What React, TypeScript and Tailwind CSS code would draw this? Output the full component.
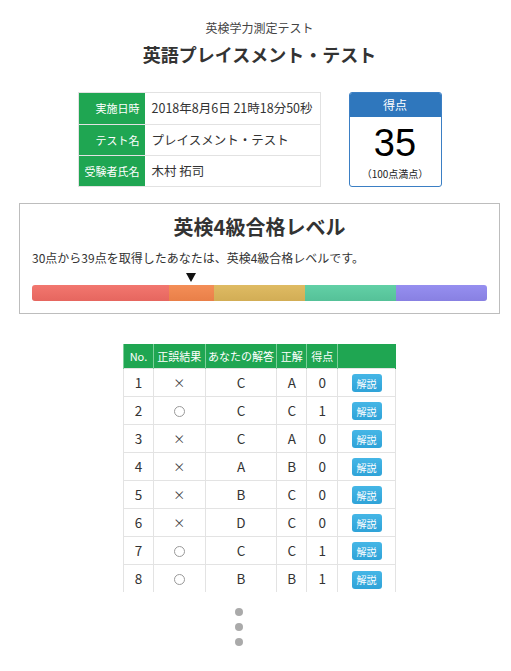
import React from 'react';

const font = { fontFamily: '"Noto Sans CJK JP", "Liberation Sans", sans-serif' };

const info = [
  { label: '実施日時', value: '2018年8月6日 21時18分50秒' },
  { label: 'テスト名', value: 'プレイスメント・テスト' },
  { label: '受験者氏名', value: '木村 拓司' },
];

const rows = [
  { no: 1, ok: false, ans: 'C', correct: 'A', pt: 0 },
  { no: 2, ok: true, ans: 'C', correct: 'C', pt: 1 },
  { no: 3, ok: false, ans: 'C', correct: 'A', pt: 0 },
  { no: 4, ok: false, ans: 'A', correct: 'B', pt: 0 },
  { no: 5, ok: false, ans: 'B', correct: 'C', pt: 0 },
  { no: 6, ok: false, ans: 'D', correct: 'C', pt: 0 },
  { no: 7, ok: true, ans: 'C', correct: 'C', pt: 1 },
  { no: 8, ok: true, ans: 'B', correct: 'B', pt: 1 },
];

const App: React.FC = () => {
  return (
    <div className="min-h-[671px] bg-white pl-[8px] pt-[19px] text-[#333]" style={font}>
      <div className="text-center text-[12px] leading-[18px] text-[#444]">英検学力測定テスト</div>
      <h1 className="mt-[5px] text-center text-[18px] font-bold leading-[24px] text-[#333]">英語プレイスメント・テスト</h1>

      {/* info + score */}
      <div className="mt-[26px] flex justify-center gap-[28px]">
        <div className="w-[243px] border border-[#e2e2e2]">
          {info.map((r, i) => (
            <div key={i} className={`flex h-[31px] ${i > 0 ? 'border-t border-[#e2e2e2]' : ''}`}>
              <div className="flex w-[66px] items-center justify-end bg-[#1fa652] pr-[5px] text-[11px] text-white">
                {r.label}
              </div>
              <div className="flex flex-1 items-center pl-[7px] text-[12.5px] text-[#333]">{r.value}</div>
            </div>
          ))}
        </div>
        <div className="flex h-[95px] w-[93px] flex-col overflow-hidden rounded-[3px] border border-[#3b7fc4]">
          <div className="flex h-[24px] items-center justify-center bg-[#2f77bd] text-[12px] text-white">得点</div>
          <div
            className="mt-[6px] text-center text-[38px] leading-[40px] text-black"
            style={{ fontFamily: '"Liberation Sans", Arial, sans-serif' }}
          >
            35
          </div>
          <div className="mt-[4px] text-center text-[10px] leading-[14px] text-[#222]">（100点満点）</div>
        </div>
      </div>

      {/* level */}
      <div className="mx-[11px] mt-[16px] border border-[#bdbdbd] px-[12px] pb-[12px] pt-[9px]">
        <h2 className="text-center text-[20px] font-bold leading-[28px] text-[#333]">英検4級合格レベル</h2>
        <p className="mt-[8px] text-[12px] leading-[18px] text-[#333]">
          30点から39点を取得したあなたは、英検4級合格レベルです。
        </p>
        <div className="mt-[6px] flex">
          <div className="flex-[3]" />
          <div className="flex flex-[1] justify-center">
            <svg width="10" height="9" viewBox="0 0 10 9">
              <polygon points="0,0 10,0 5,9" fill="#111" />
            </svg>
          </div>
          <div className="flex-[6]" />
        </div>
        <div className="mt-[3px] flex h-[16px] overflow-hidden rounded-[3px] shadow-[inset_0_-2px_0_rgba(0,0,0,0.08)]">
          <div className="flex-[3] bg-gradient-to-b from-[#f2776f] to-[#e6665f]" />
          <div className="flex-[1] bg-gradient-to-b from-[#f48e57] to-[#e97f48]" />
          <div className="flex-[2] bg-gradient-to-b from-[#dfbb63] to-[#d2ad55]" />
          <div className="flex-[2] bg-gradient-to-b from-[#62d0a6] to-[#55c198]" />
          <div className="flex-[2] bg-gradient-to-b from-[#968ff0] to-[#8880e2]" />
        </div>
      </div>

      {/* answers */}
      <div className="mt-[30px] flex justify-center">
        <table className="w-[273px] border-collapse text-center text-[13.5px] text-[#333]">
          <thead>
            <tr className="h-[24px] bg-[#1fa652] text-[11px] font-normal text-white">
              <th className="w-[30px] border-x border-[#7ccf9a] font-normal">No.</th>
              <th className="w-[52px] border-x border-[#7ccf9a] font-normal">正誤結果</th>
              <th className="w-[72px] border-x border-[#7ccf9a] font-normal">あなたの解答</th>
              <th className="w-[30px] border-x border-[#7ccf9a] font-normal">正解</th>
              <th className="w-[31px] border-x border-[#7ccf9a] font-normal">得点</th>
              <th className="w-[58px] border-x border-[#1fa652] font-normal" />
            </tr>
          </thead>
          <tbody>
            {rows.map((r) => (
              <tr key={r.no} className="h-[28px]">
                <td className="border-x border-t border-[#e3e3e3]">{r.no}</td>
                <td className="border-x border-t border-[#e3e3e3]">
                  {r.ok ? (
                    <span className="inline-block h-[11px] w-[11px] rounded-full border border-[#999] align-[-1px]" />
                  ) : (
                    <span className="text-[12px] text-[#444]">×</span>
                  )}
                </td>
                <td className="border-x border-t border-[#e3e3e3]">{r.ans}</td>
                <td className="border-x border-t border-[#e3e3e3]">{r.correct}</td>
                <td className="border-x border-t border-[#e3e3e3]">{r.pt}</td>
                <td className="border-x border-t border-[#e3e3e3]">
                  <span className="inline-flex h-[18px] w-[30px] items-center justify-center rounded-[3px] bg-gradient-to-b from-[#45b6e6] to-[#2fa3d8] text-[10px] text-white">
                    解説
                  </span>
                </td>
              </tr>
            ))}
          </tbody>
        </table>
      </div>

      <div className="mt-[16px] flex flex-col items-center gap-[7px] pr-[41px]">
        <span className="h-[8px] w-[8px] rounded-full bg-[#aaa]" />
        <span className="h-[8px] w-[8px] rounded-full bg-[#aaa]" />
        <span className="h-[8px] w-[8px] rounded-full bg-[#aaa]" />
      </div>
    </div>
  );
};

export default App;
